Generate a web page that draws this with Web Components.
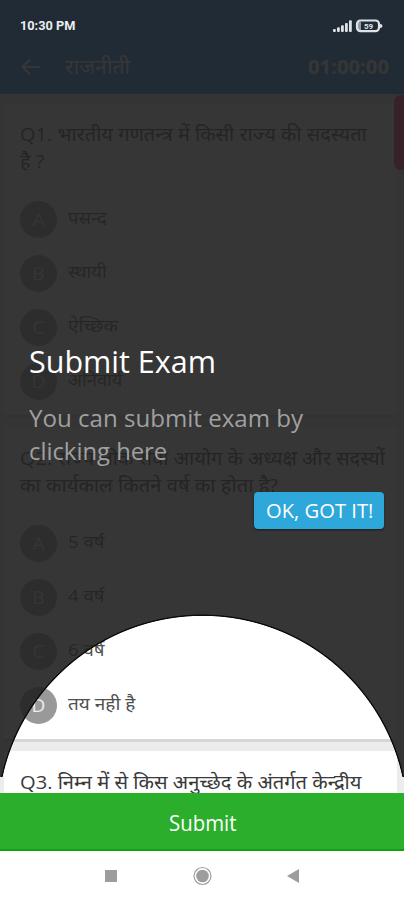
<!DOCTYPE html>
<html lang="hi">
<head>
<meta charset="UTF-8">
<title>Exam</title>
<style>
    html, body { margin: 0; padding: 0; }
    body {
        width: 404px;
        height: 900px;
        overflow: hidden;
        background: #ececec;
        font-family: "Open Sans", "Noto Sans", "Noto Sans Devanagari", sans-serif;
    }
</style>
</head>
<body>
<exam-screen>
    <status-bar slot="status" time="10:30 PM"></status-bar>
    <app-header slot="header" heading="राजनीती" timer="01:00:00"></app-header>
    <question-card>
        <fit-text slot="q" w="347">Q1. भारतीय गणतन्त्र में किसी राज्य की सदस्यता</fit-text>
        <fit-text slot="q" w="24">है ?</fit-text>
        <answer-option key="A" w="38">पसन्द</answer-option>
        <answer-option key="B" w="39">स्थायी</answer-option>
        <answer-option key="C" w="50">ऐच्छिक</answer-option>
        <answer-option key="D" w="55">अनिवार्य</answer-option>
    </question-card>
    <question-card>
        <fit-text slot="q" w="365">Q2. राज्य लोक सेवा आयोग के अध्यक्ष और सदस्यों</fit-text>
        <fit-text slot="q" w="258">का कार्यकाल कितने वर्ष का होता है?</fit-text>
        <answer-option key="A" w="36">5 वर्ष</answer-option>
        <answer-option key="B" w="36">4 वर्ष</answer-option>
        <answer-option key="C" w="36">6 वर्ष</answer-option>
        <answer-option key="D" w="67">तय नही है</answer-option>
    </question-card>
    <question-card>
        <fit-text slot="q" w="342">Q3. निम्न में से किस अनुच्छेद के अंतर्गत केन्द्रीय</fit-text>
    </question-card>
    <submit-bar slot="footer">Submit</submit-bar>
    <nav-bar slot="footer"></nav-bar>
    <coach-mark slot="overlay">
        <fit-text slot="title" w="187">Submit Exam</fit-text>
        <fit-text slot="text" w="274">You can submit exam by</fit-text>
        <fit-text slot="text" w="138">clicking here</fit-text>
        <fit-text slot="action" w="107">OK, GOT IT!</fit-text>
    </coach-mark>
</exam-screen>

<script>
// one line of text, stretched to the width given in "w"
class FitText extends HTMLElement {
    constructor() {
        super();
        this.attachShadow({ mode: 'open' });
        this.shadowRoot.innerHTML = `
            <style>
              :host { display: block; height: 1lh; white-space: nowrap; }
              span { display: inline-block; transform-origin: 0 50%; }
            </style>
            <span><slot></slot></span>
        `;
    }

    connectedCallback() {
        requestAnimationFrame(() => this.fit());
    }

    fit() {
        const width = Number(this.getAttribute('w'));
        const span = this.shadowRoot.querySelector('span');
        if (!width || !span.offsetWidth) return;
        span.style.transform = `scaleX(${width / span.offsetWidth})`;
        this.style.width = width + 'px';
    }
}

class ExamScreen extends HTMLElement {
    constructor() {
        super();
        this.attachShadow({ mode: 'open' });
        this.shadowRoot.innerHTML = `
            <style>
              :host { display: flex; flex-direction: column; position: relative; width: 404px; height: 900px; overflow: hidden; }
              main { flex: 1; min-height: 0; overflow: hidden; display: flex; flex-direction: column; gap: 9px; padding: 9px 7px 0 4px; position: relative; }
              .tab { position: absolute; right: -5px; top: 1px; width: 15px; height: 75px; border-radius: 7px; background: #ff2058; }
            </style>
            <slot name="status"></slot>
            <slot name="header"></slot>
            <main><slot></slot><div class="tab"></div></main>
            <slot name="footer"></slot>
            <slot name="overlay"></slot>
        `;
    }
}

// its items stay lit above the dimmed page
class StatusBar extends HTMLElement {
    constructor() {
        super();
        this.attachShadow({ mode: 'open' });
    }

    connectedCallback() {
        this.shadowRoot.innerHTML = `
            <style>
              :host { display: flex; justify-content: space-between; align-items: center; box-sizing: border-box; height: 40px; padding: 12px 21px 0 20px; color: #eceef0; position: relative; z-index: 3; }
              fit-text { font: bold 12.5px/18px Roboto, sans-serif; }
            </style>
            <fit-text w="55">${this.getAttribute('time')}</fit-text>
            <svg width="50" height="14" viewBox="0 0 50 14" fill="#dfe3e7">
              <rect x="0" y="10" width="2.8" height="3" rx="1"/>
              <rect x="4" y="8.3" width="2.8" height="4.7" rx="1"/>
              <rect x="8" y="6.3" width="2.8" height="6.7" rx="1"/>
              <rect x="12" y="4" width="2.8" height="9" rx="1"/>
              <rect x="16" y="1.3" width="2.8" height="11.7" rx="1"/>
              <rect x="24" y="1.500" width="22" height="10.700" rx="3.500" fill="none" stroke="#dfe3e7" stroke-width="2.200"/>
              <path d="M47 5q2.500 0 2.500 2t-2.500 2z"/>
              <path d="M25 3h3v8h-3z" opacity=".6"/>
              <text x="35.500" y="9.800" font-family="Roboto, sans-serif" font-size="8" font-weight="bold" text-anchor="middle">59</text>
            </svg>
        `;
    }
}

class AppHeader extends HTMLElement {
    constructor() {
        super();
        this.attachShadow({ mode: 'open' });
    }

    connectedCallback() {
        this.shadowRoot.innerHTML = `
            <style>
              :host { display: flex; align-items: center; box-sizing: border-box; height: 94px; margin-top: -40px; padding: 40px 15px 0 20px; background: #1985f0; color: #fff; }
              svg { margin-right: 24px; }
              .title { font-size: 20px; line-height: 28px; flex: 1; }
              .timer { font-size: 20px; line-height: 28px; font-weight: bold; }
            </style>
            <svg width="21" height="18" viewBox="0 0 21 18" fill="none" stroke="#fff" stroke-width="2.2"><path d="M20 9H2.500M10 1.500L2.500 9l7.500 7.500"/></svg>
            <div class="title"><fit-text w="65">${this.getAttribute('heading')}</fit-text></div>
            <fit-text class="timer" w="81">${this.getAttribute('timer')}</fit-text>
        `;
    }
}

class QuestionCard extends HTMLElement {
    constructor() {
        super();
        this.attachShadow({ mode: 'open' });
        this.shadowRoot.innerHTML = `
            <style>
              :host { display: block; flex: none; box-sizing: border-box; height: 315px; padding: 18px 10px 0 16px; background: #fff; border-bottom: 3px solid #d6d6d6; }
              .question { margin-bottom: 17px; font-size: 19px; line-height: 27px; color: #3a3a3a; }
            </style>
            <div class="question"><slot name="q"></slot></div>
            <slot></slot>
        `;
    }
}

class AnswerOption extends HTMLElement {
    constructor() {
        super();
        this.attachShadow({ mode: 'open' });
    }

    connectedCallback() {
        this.shadowRoot.innerHTML = `
            <style>
              :host { display: flex; align-items: center; gap: 11px; height: 54px; font-size: 17px; line-height: 26px; color: #505050; }
              .key { width: 37px; height: 37px; border-radius: 50%; background: #999; color: #eee; font-size: 19px; line-height: 36px; text-align: center; }
              fit-text { margin-top: -3px; }
            </style>
            <div class="key">${this.getAttribute('key')}</div>
            <fit-text w="${this.getAttribute('w')}"><slot></slot></fit-text>
        `;
    }
}

class SubmitBar extends HTMLElement {
    constructor() {
        super();
        this.attachShadow({ mode: 'open' });
        this.shadowRoot.innerHTML = `
            <style>
              :host { display: flex; justify-content: center; align-items: center; box-sizing: border-box; height: 58px; background: #2bae2b; border-bottom: 2px solid #12a012; color: #fff; font-size: 21px; line-height: 28px; position: relative; z-index: 2; }
              fit-text { margin: 4px 0 0 1px; }
            </style>
            <fit-text w="67"><slot></slot></fit-text>
        `;
    }
}

class NavBar extends HTMLElement {
    constructor() {
        super();
        this.attachShadow({ mode: 'open' });
        this.shadowRoot.innerHTML = `
            <style>
              :host { display: flex; justify-content: center; height: 49px; background: #fff; position: relative; z-index: 2; }
            </style>
            <svg width="404" height="49" viewBox="0 0 404 49" fill="#9d9d9d">
              <rect x="105" y="19" width="12" height="12"/>
              <circle cx="202.500" cy="25" r="6.300"/>
              <circle cx="202.500" cy="25" r="8.500" fill="none" stroke="#9d9d9d" stroke-width="1.200"/>
              <path d="M287 25l12-7v14z"/>
            </svg>
        `;
    }
}

class CoachMark extends HTMLElement {
    constructor() {
        super();
        this.attachShadow({ mode: 'open' });
        this.shadowRoot.innerHTML = `
            <style>
              :host {
                position: absolute; z-index: 1; left: 0; top: 0; width: 404px; height: 777px; overflow: hidden;
                background: radial-gradient(circle at 202.5px 820.5px, transparent 204.2px, #0c0c0c 205px, #0c0c0c 205.6px, rgba(34, 34, 34, .91) 206.4px);
              }
              .message { display: flex; flex-direction: column; padding: 340px 20px 0 29px; }
              .title { color: #fff; font-size: 31px; line-height: 42px; }
              .text { margin-top: 19px; color: #a0a0a0; font-size: 24px; line-height: 33px; }
              .action { align-self: flex-end; display: flex; align-items: center; justify-content: center; box-sizing: border-box; width: 130px; height: 37px; margin-top: 25px; padding-top: 1px; border-radius: 4px; background: #2ea8da; color: #fff; font-size: 20px; line-height: 28px; box-shadow: 0 1px 2px rgba(0, 0, 0, .5); }
            </style>
            <div class="message">
              <div class="title"><slot name="title"></slot></div>
              <div class="text"><slot name="text"></slot></div>
              <div class="action"><slot name="action"></slot></div>
            </div>
        `;
    }
}

customElements.define('fit-text', FitText);
customElements.define('exam-screen', ExamScreen);
customElements.define('status-bar', StatusBar);
customElements.define('app-header', AppHeader);
customElements.define('question-card', QuestionCard);
customElements.define('answer-option', AnswerOption);
customElements.define('submit-bar', SubmitBar);
customElements.define('nav-bar', NavBar);
customElements.define('coach-mark', CoachMark);
</script>
</body>
</html>
